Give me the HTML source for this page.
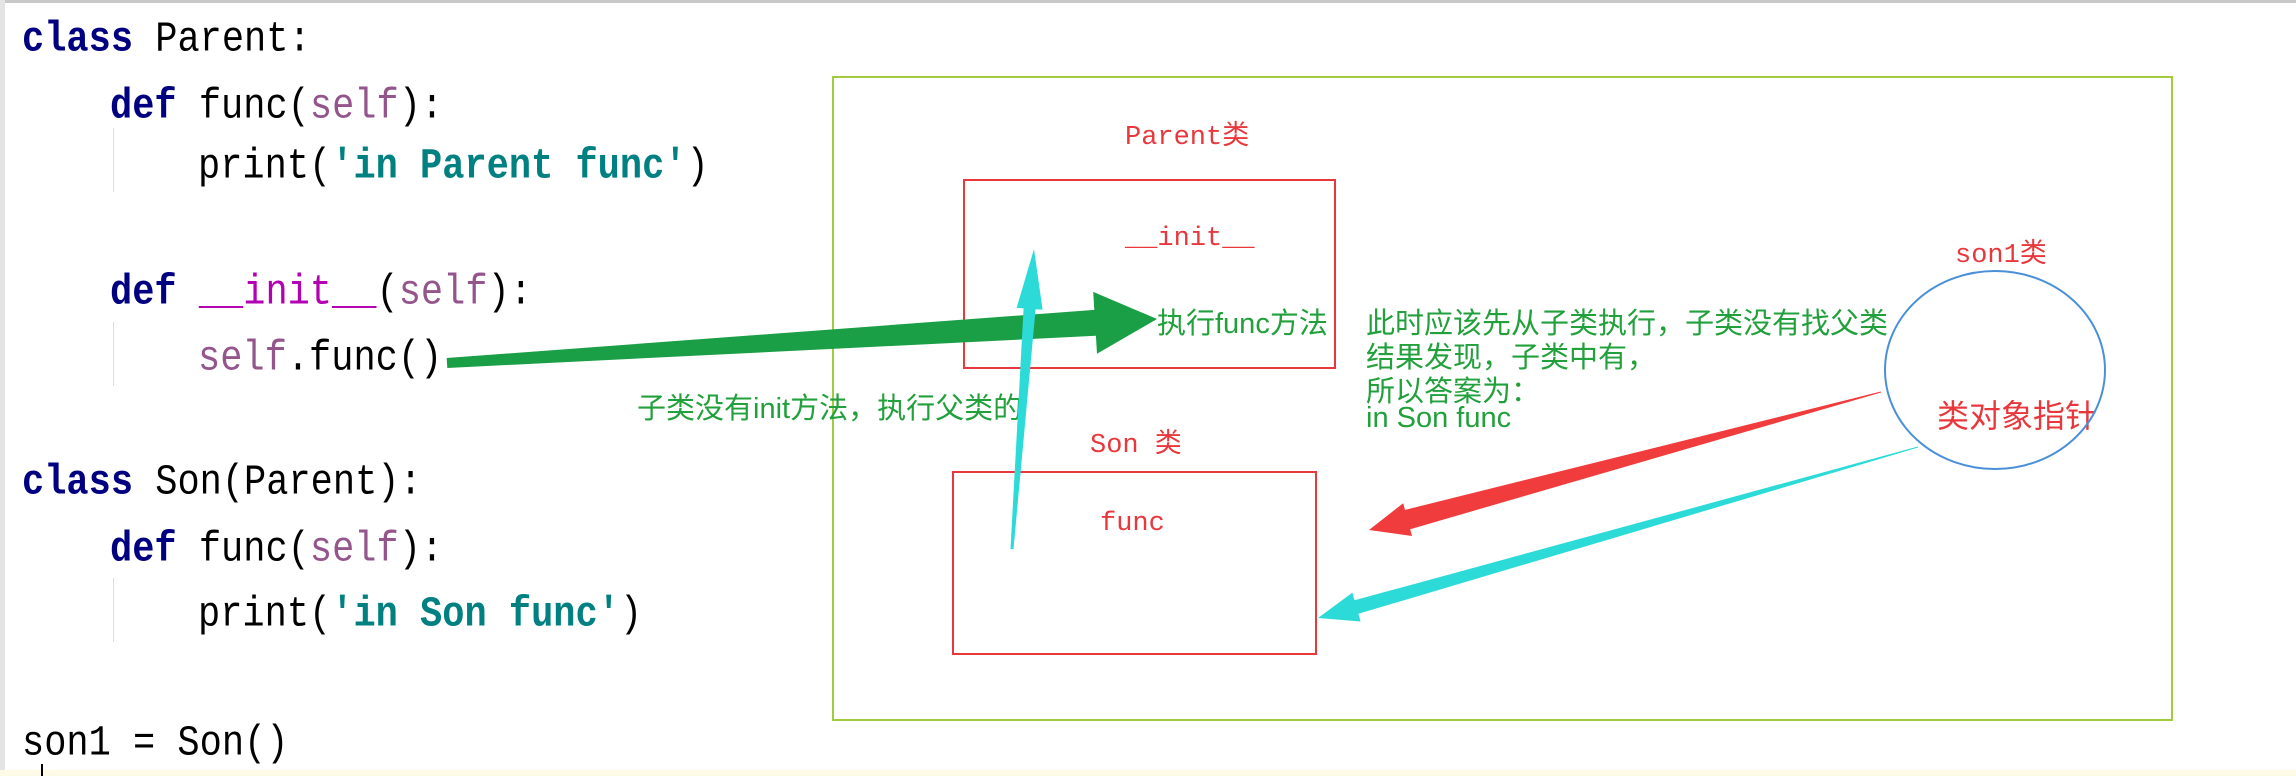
<!DOCTYPE html>
<html><head><meta charset="utf-8"><style>
html,body{margin:0;padding:0;}
body{width:2296px;height:776px;background:#fff;position:relative;overflow:hidden;}
.l{position:absolute;font-family:"Liberation Mono",monospace;font-size:37px;line-height:44px;white-space:pre;color:#000;transform:scaleY(1.15);transform-origin:0 50%;}
.k{color:#000080;font-weight:bold;}
.s{color:#94558d;}
.t{color:#008080;font-weight:bold;}
.m{color:#b200b2;}
.d{position:absolute;white-space:nowrap;}
.r{color:#e8383d;font-family:"Liberation Mono","Noto Sans CJK SC",monospace;font-size:27px;}
.g{color:#22a03c;font-family:"Liberation Sans","Noto Sans CJK SC",sans-serif;font-size:29px;}
</style></head><body>
<div style="position:absolute;left:0;top:0;width:2296px;height:3px;background:#c8c8c8"></div>
<div style="position:absolute;left:0;top:0;width:5px;height:776px;background:#e4e4e4"></div>
<div style="position:absolute;left:0;top:770px;width:2296px;height:6px;background:#fdfbe6"></div>
<div style="position:absolute;left:41px;top:764px;width:2px;height:12px;background:#000"></div>
<div style="position:absolute;left:113px;top:128px;width:1px;height:64px;background:#ddd"></div>
<div style="position:absolute;left:113px;top:322px;width:1px;height:64px;background:#ddd"></div>
<div style="position:absolute;left:113px;top:578px;width:1px;height:64px;background:#ddd"></div>

<div class="l" style="left:22px;top:18px"><span class="k">class</span> Parent:</div>
<div class="l" style="left:110px;top:85px"><span class="k">def</span> func(<span class="s">self</span>):</div>
<div class="l" style="left:198px;top:145px">print(<span class="t">'in Parent func'</span>)</div>
<div class="l" style="left:110px;top:271px"><span class="k">def</span> <span class="m">__init__</span>(<span class="s">self</span>):</div>
<div class="l" style="left:198px;top:337px"><span class="s">self</span>.func()</div>
<div class="l" style="left:22px;top:461px"><span class="k">class</span> Son(Parent):</div>
<div class="l" style="left:110px;top:528px"><span class="k">def</span> func(<span class="s">self</span>):</div>
<div class="l" style="left:198px;top:593px">print(<span class="t">'in Son func'</span>)</div>
<div class="l" style="left:22px;top:722px">son1 = Son()</div>

<div style="position:absolute;left:832px;top:76px;width:1337px;height:641px;border:2px solid #a2cc3e"></div>
<div style="position:absolute;left:963px;top:179px;width:369px;height:186px;border:2px solid #e8383d"></div>
<div style="position:absolute;left:952px;top:471px;width:361px;height:180px;border:2px solid #e8383d"></div>

<div class="d r" style="left:1125px;top:113px">Parent类</div>
<div class="d r" style="left:1125px;top:224px">__init__</div>
<div class="d r" style="left:1090px;top:421px">Son 类</div>
<div class="d r" style="left:1100px;top:509px">func</div>
<div class="d r" style="left:1955px;top:231px">son1类</div>
<div class="d r" style="left:1937px;top:391px;font-size:32px">类对象指针</div>

<div class="d g" style="left:1157px;top:300px">执行func方法</div>
<div class="d g" style="left:1366px;top:300px">此时应该先从子类执行，子类没有找父类</div>
<div class="d g" style="left:1366px;top:334px">结果发现，子类中有，</div>
<div class="d g" style="left:1366px;top:368px">所以答案为：</div>
<div class="d g" style="left:1366px;top:402px">in Son func</div>
<div class="d g" style="left:637px;top:385px">子类没有init方法，执行父类的</div>

<svg id="sv" width="2296" height="776" style="position:absolute;left:0;top:0">
<ellipse cx="1995" cy="370" rx="110" ry="99" fill="none" stroke="#4a90d9" stroke-width="2"/>
</svg>
<script>
function arrow(x1,y1,x2,y2,tw,sw,hw,hl,c){
 var dx=x2-x1,dy=y2-y1,L=Math.sqrt(dx*dx+dy*dy),ux=dx/L,uy=dy/L,px=-uy,py=ux;
 var bx=x2-ux*hl,by=y2-uy*hl;
 var p=[[x1+px*tw/2,y1+py*tw/2],[bx+px*sw/2,by+py*sw/2],[bx+px*hw/2,by+py*hw/2],[x2,y2],[bx-px*hw/2,by-py*hw/2],[bx-px*sw/2,by-py*sw/2],[x1-px*tw/2,y1-py*tw/2]];
 var e=document.createElementNS("http://www.w3.org/2000/svg","polygon");
 e.setAttribute("points",p.map(function(q){return q[0].toFixed(1)+","+q[1].toFixed(1)}).join(" "));
 e.setAttribute("fill",c);document.getElementById("sv").appendChild(e);
}
arrow(447,363,1157,319,10,26,62,62,"#1a9e46");
arrow(1012,549,1034,249,3,12,26,60,"#2cdbd8");
arrow(1881,392,1369,530,1,20,34,40,"#f03c3c");
arrow(1918,447,1318,618,1,14,30,40,"#2cdbd8");
</script>
</body></html>
